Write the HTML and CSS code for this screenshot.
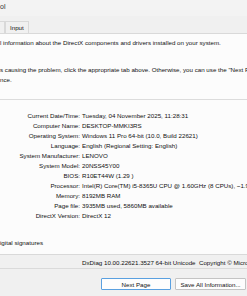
FILE: index.html
```html
<!doctype html>
<html>
<head>
    <title>DirectX Diagnostic Tool</title>
<link rel="stylesheet" href="styles.css">
</head>
<body>
    <div class="window">
        <div class="title-bar">ol</div>
        <div class="tab-strip">
            <div class="tab tab-cut"></div>
            <div class="tab">Input</div>
        </div>
        <div class="tab-page">
            <p class="intro">l information about the DirectX components and drivers installed on your system.</p>
            <p class="intro intro-second">s causing the problem, click the appropriate tab above. Otherwise, you can use the "Next Page" button below to visit each page in sequence.<br>nce.</p>
            <div class="group">
                <div class="info-grid">
                    <span class="label">Current Date/Time:</span><span class="value">Tuesday, 04 November 2025, 11:28:31</span>
                    <span class="label">Computer Name:</span><span class="value">DESKTOP-MMKI3RS</span>
                    <span class="label">Operating System:</span><span class="value">Windows 11 Pro 64-bit (10.0, Build 22621)</span>
                    <span class="label">Language:</span><span class="value">English (Regional Setting: English)</span>
                    <span class="label">System Manufacturer:</span><span class="value">LENOVO</span>
                    <span class="label">System Model:</span><span class="value">20NSS45Y00</span>
                    <span class="label">BIOS:</span><span class="value">R10ET44W (1.29 )</span>
                    <span class="label">Processor:</span><span class="value">Intel(R) Core(TM) i5-8365U CPU @ 1.60GHz (8 CPUs), ~1.9GHz</span>
                    <span class="label">Memory:</span><span class="value">8192MB RAM</span>
                    <span class="label">Page file:</span><span class="value">3935MB used, 5860MB available</span>
                    <span class="label">DirectX Version:</span><span class="value">DirectX 12</span>
                </div>
            </div>
            <p class="check-line">igital signatures</p>
        </div>
        <div class="footer">
            <div class="version-line">DxDiag 10.00.22621.3527 64-bit Unicode&nbsp; Copyright © Microsoft. All rights reserved.</div>
            <div class="button-row">
                <button class="dlg-button default-button">Next Page</button>
                <button class="dlg-button">Save All Information...</button>
                <button class="dlg-button">Exit</button>
            </div>
        </div>
    </div>
</body>
</html>
```
FILE: styles.css
```css
html, body {
    margin: 0;
    padding: 0;
}
body {
    width: 247px;
    height: 296px;
    overflow: hidden;
    background-color: #f0f0f0;
    font-family: "Liberation Sans", Arial, sans-serif;
    font-size: 6.2px;
    color: #111;
}
.window {
    white-space: nowrap;
}
.title-bar {
    height: 16px;
    line-height: 14px;
    font-size: 7px;
    color: #333;
    background-color: #f3f3f3;
}
.tab-strip {
    display: flex;
    align-items: flex-end;
    height: 17px;
    background-color: #f0f0f0;
}
.tab {
    height: 11px;
    line-height: 11px;
    padding: 0 4px;
    border: 1px solid #d9d9d9;
    border-bottom: none;
    background-color: #f0f0f0;
}
.tab-cut {
    width: 0;
    padding: 0 2px;
    border-left: none;
}
.tab-page {
    background-color: #fcfcfc;
    border-top: 1px solid #d9d9d9;
    border-bottom: 1px solid #d9d9d9;
    padding: 4px 0 6px 0;
    overflow: hidden;
}
.intro {
    margin: 0;
    line-height: 10px;
}
.intro-second {
    margin-top: 17px;
}
.group {
    margin-top: 14px;
    border-top: 1px solid #dcdcdc;
    padding-top: 11px;
}
.info-grid {
    display: grid;
    grid-template-columns: 80px auto;
    column-gap: 2px;
    line-height: 10px;
}
.label {
    text-align: right;
}
.check-line {
    margin: 17px 0 0 0;
    line-height: 10px;
}
.footer {
    padding-top: 3px;
}
.version-line {
    padding-left: 82px;
    line-height: 10px;
    border-bottom: 1px solid #dadada;
}
.button-row {
    display: flex;
    gap: 4px;
    margin-top: 9px;
    padding-left: 101px;
}
.dlg-button {
    flex: none;
    width: 71px;
    height: 12px;
    padding: 0;
    font-family: "Liberation Sans", Arial, sans-serif;
    font-size: 6.2px;
    color: #111;
    background-color: #fdfdfd;
    border: 1px solid #c4c4c4;
    border-radius: 1px;
}
.default-button {
    width: 70px;
    border-color: #5aa0e0;
}
```
